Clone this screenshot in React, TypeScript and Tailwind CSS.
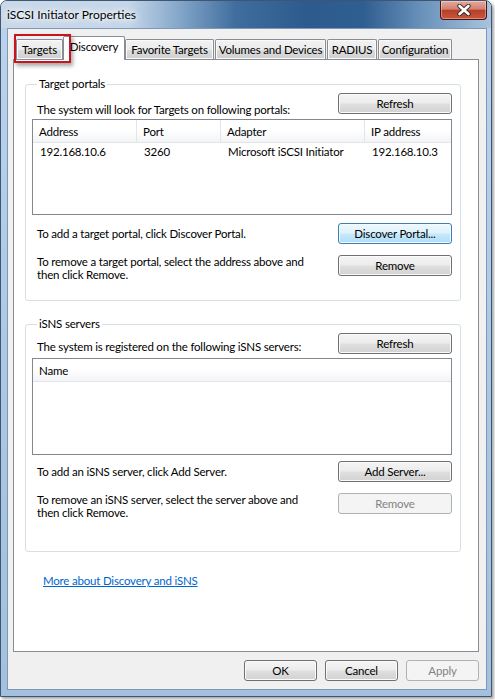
import React from "react";

type BtnVariant = "normal" | "default" | "disabled";

function Btn({ label, w = "w-[114px]", variant = "normal" }: { label: string; w?: string; variant?: BtnVariant }) {
  const base = "h-[21px] rounded-[3px] border flex items-center justify-center leading-[16px] shrink-0 whitespace-nowrap";
  const styles: Record<BtnVariant, string> = {
    normal:
      "border-[#707070] bg-[linear-gradient(#f4f4f4_0%,#ececec_48%,#dfdfdf_52%,#d2d2d2_100%)] shadow-[inset_0_0_0_1px_#fbfbfb] text-black",
    default:
      "border-[#3c7fb1] bg-[linear-gradient(#eef8fe_0%,#def2fc_48%,#c6e9fc_52%,#b0dcf5_100%)] shadow-[inset_0_0_0_1px_#f2fbff] text-black",
    disabled: "border-[#adb2b5] bg-[#f4f4f4] text-[#838383]",
  };
  return <div className={`${base} ${w} ${styles[variant]}`}>{label}</div>;
}

function Tab({ label, w, selected = false }: { label: string; w: string; selected?: boolean }) {
  if (selected) {
    return (
      <div
        className={`${w} h-[24px] -mb-px -mx-[1px] relative z-10 bg-white border border-b-0 border-[#898c95] rounded-t-[2px] flex items-start justify-center pt-[2px] leading-[16px] whitespace-nowrap`}
      >
        {label}
      </div>
    );
  }
  return (
    <div
      className={`${w} h-[20px] border border-b-0 border-[#898c95] rounded-t-[2px] bg-[linear-gradient(#f2f2f2_0%,#ebebeb_50%,#dddddd_51%,#cfcfcf_100%)] shadow-[inset_0_0_0_1px_#fafafa] flex items-center justify-center leading-[16px] whitespace-nowrap`}
    >
      {label}
    </div>
  );
}

function ListView({ h, cols, rows }: { h: string; cols: { label: string; w: string }[]; rows: string[][] }) {
  return (
    <div className={`${h} w-full border border-[#828790] bg-white flex flex-col`}>
      <div className="h-[23px] flex border-b border-[#e2e4e8] bg-[linear-gradient(#ffffff_0%,#ffffff_45%,#f3f4f6_100%)]">
        {cols.map((c, i) => (
          <div
            key={i}
            className={`${c.w} h-full flex items-center pl-[6px] pt-[1px] leading-[16px] whitespace-nowrap ${
              i < cols.length - 1 ? "border-r border-[#e3e5e8]" : ""
            }`}
          >
            {c.label}
          </div>
        ))}
      </div>
      {rows.map((r, ri) => (
        <div key={ri} className="h-[18px] flex">
          {r.map((cell, ci) => (
            <div key={ci} className={`${cols[ci].w} h-full flex items-center pl-[7px] leading-[16px] whitespace-nowrap`}>
              {cell}
            </div>
          ))}
        </div>
      ))}
    </div>
  );
}

function TwoLines({ a, b }: { a: string; b: string }) {
  return (
    <div className="ml-[5px] whitespace-nowrap">
      <div className="leading-[13px]">{a}</div>
      <div className="leading-[13px]">{b}</div>
    </div>
  );
}

export default function App() {
  return (
    <div className="w-[495px] h-[700px] bg-white font-['Lato',sans-serif] text-[11.5px] tracking-[-0.2px] text-black overflow-hidden">
      <div className="w-[492px] h-[697px] flex flex-col rounded-t-[7px] border border-[#3f5670] bg-[linear-gradient(180deg,#bcd3ec_0%,#aac6e4_60%,#a3c0df_100%)] shadow-[2px_2px_3px_rgba(0,0,0,0.35)]">
        {/* Title bar */}
        <div className="h-[27px] flex items-start rounded-t-[6px] bg-[linear-gradient(90deg,#c9d9ea_0%,#c4d6e9_26%,#86a8cb_36%,#3f6d9e_48%,#2d5b8d_62%,#2f5e90_74%,#6a92bb_86%,#a9c3de_100%)]">
          <div className="pl-[6px] pt-[6px] leading-[16px] text-[12px] tracking-normal text-black whitespace-nowrap [text-shadow:0_0_4px_#fff,0_0_8px_#fff,0_0_12px_#fff]">
            iSCSI Initiator Properties
          </div>
          <div className="ml-auto mr-[4px] w-[47px] h-[19px] rounded-b-[4px] border border-t-0 border-[#4a1410] bg-[linear-gradient(#e4aa9f_0%,#d2806f_45%,#b8402a_52%,#c9553c_100%)] shadow-[inset_0_0_0_1px_rgba(255,255,255,0.35)] flex items-center justify-center">
            <svg width="16" height="12" viewBox="0 0 16 12">
              <path d="M3.5 2 L12.5 10 M12.5 2 L3.5 10" stroke="#3b2a2a" strokeWidth="4.4" strokeLinecap="round" />
              <path d="M3.5 2 L12.5 10 M12.5 2 L3.5 10" stroke="#ffffff" strokeWidth="2.6" strokeLinecap="round" />
            </svg>
          </div>
        </div>

        {/* Client area */}
        <div className="flex-1 ml-[6px] mr-[4px] mb-[6px] border border-[#7f98b3] bg-[#f0f0f0] flex flex-col">
          {/* Tab strip */}
          <div className="mt-[7px] ml-[5px] mr-[7px] h-[23px] flex items-end pl-[3px] gap-[1px] relative">
            <Tab label="Targets" w="w-[47px]" />
            <Tab label="Discovery" w="w-[62px]" selected />
            <Tab label="Favorite Targets" w="w-[89px]" />
            <Tab label="Volumes and Devices" w="w-[111px]" />
            <Tab label="RADIUS" w="w-[50px]" />
            <Tab label="Configuration" w="w-[74px]" />
            {/* red annotation box */}
            <div className="absolute left-[1px] top-[-2px] w-[57px] h-[29px] border-[2.5px] border-[#c8141c] shadow-[2px_3px_4px_rgba(0,0,0,0.35)] z-20 pointer-events-none" />
          </div>

          {/* Tab panel */}
          <div className="ml-[5px] mr-[7px] h-[593px] border border-[#898c95] bg-white flex flex-col">
            {/* Target portals */}
            <fieldset className="mt-[16px] ml-[11px] mr-[17px] border border-[#d5dfe5] rounded-[3px] pl-[6px] pr-[8px] pb-[19px]">
              <legend className="ml-[5px] px-[2px] leading-[16px]">Target portals</legend>
              <div className="mt-[1px] flex items-start justify-between">
                <div className="ml-[5px] mt-[9px] leading-[16px] whitespace-nowrap">The system will look for Targets on following portals:</div>
                <Btn label="Refresh" />
              </div>
              <div className="mt-[1px]">
                <ListView
                  h="h-[96px]"
                  cols={[
                    { label: "Address", w: "w-[104px]" },
                    { label: "Port", w: "w-[84px]" },
                    { label: "Adapter", w: "w-[144px]" },
                    { label: "IP address", w: "flex-1" },
                  ]}
                  rows={[["192.168.10.6", "3260", "Microsoft iSCSI Initiator", "192.168.10.3"]]}
                />
              </div>
              <div className="mt-[8px] flex items-center justify-between">
                <div className="ml-[5px] leading-[16px] whitespace-nowrap">To add a target portal, click Discover Portal.</div>
                <Btn label="Discover Portal..." variant="default" />
              </div>
              <div className="mt-[11px] flex items-start justify-between">
                <TwoLines a="To remove a target portal, select the address above and" b="then click Remove." />
                <Btn label="Remove" />
              </div>
            </fieldset>

            {/* iSNS servers */}
            <fieldset className="mt-[15px] ml-[11px] mr-[17px] border border-[#d5dfe5] rounded-[3px] pl-[6px] pr-[8px] pb-[32px]">
              <legend className="ml-[5px] px-[2px] leading-[16px]">iSNS servers</legend>
              <div className="mt-[1px] flex items-start justify-between">
                <div className="ml-[5px] mt-[6px] leading-[16px] whitespace-nowrap">The system is registered on the following iSNS servers:</div>
                <Btn label="Refresh" />
              </div>
              <div className="mt-[3px]">
                <ListView h="h-[97px]" cols={[{ label: "Name", w: "flex-1" }]} rows={[]} />
              </div>
              <div className="mt-[6px] flex items-center justify-between">
                <div className="ml-[5px] leading-[16px] whitespace-nowrap">To add an iSNS server, click Add Server.</div>
                <Btn label="Add Server..." />
              </div>
              <div className="mt-[11px] flex items-start justify-between">
                <TwoLines a="To remove an iSNS server, select the server above and" b="then click Remove." />
                <Btn label="Remove" variant="disabled" />
              </div>
            </fieldset>

            <div className="mt-[21px] ml-[29px] leading-[16px]">
              <span className="text-[#0066cc] underline">More about Discovery and iSNS</span>
            </div>
          </div>

          {/* Dialog buttons */}
          <div className="mt-[8px] mr-[7px] flex justify-end gap-[8px]">
            <Btn label="OK" w="w-[73px]" />
            <Btn label="Cancel" w="w-[73px]" />
            <Btn label="Apply" w="w-[73px]" variant="disabled" />
          </div>
        </div>
      </div>
    </div>
  );
}
